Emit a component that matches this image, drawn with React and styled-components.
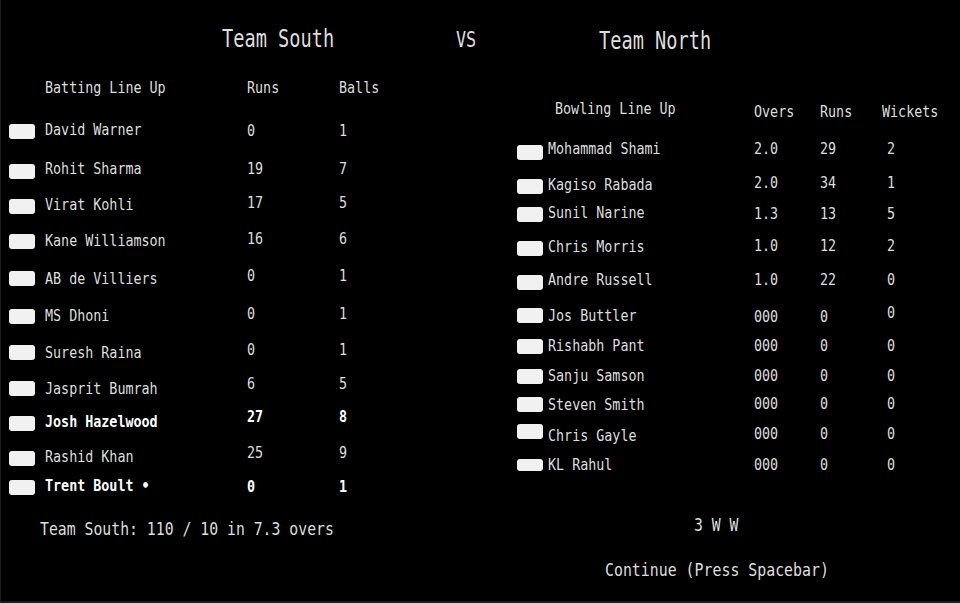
import React from "react";
import styled, { createGlobalStyle } from "styled-components";

const GlobalStyle = createGlobalStyle`
  html, body {
    margin: 0;
    padding: 0;
    background: #000;
  }
`;

const batting = [
  { name: "David Warner", runs: "0", balls: "1", h: 40, nd: 0, vd: 1 },
  { name: "Rohit Sharma", runs: "19", balls: "7", h: 35, nd: -1, vd: -1 },
  { name: "Virat Kohli", runs: "17", balls: "5", h: 35, nd: 0, vd: -2 },
  { name: "Kane Williamson", runs: "16", balls: "6", h: 37, nd: 1, vd: -1 },
  { name: "AB de Villiers", runs: "0", balls: "1", h: 38, nd: 2, vd: -1 },
  { name: "MS Dhoni", runs: "0", balls: "1", h: 36, nd: 1, vd: -1 },
  { name: "Suresh Raina", runs: "0", balls: "1", h: 36, nd: 2, vd: -1 },
  { name: "Jasprit Bumrah", runs: "6", balls: "5", h: 35, nd: 2, vd: -3 },
  { name: "Josh Hazelwood", runs: "27", balls: "8", h: 35, nd: 0, vd: -5, bold: true },
  { name: "Rashid Khan", runs: "25", balls: "9", h: 29, nd: 0, vd: -4 },
  { name: "Trent Boult •", runs: "0", balls: "1", h: 16, nd: 0, vd: 1, bold: true },
];

const bowling = [
  { name: "Mohammad Shami", overs: "2.0", runs: "29", wkts: "2", h: 34, nd: -2, vd: -2 },
  { name: "Kagiso Rabada", overs: "2.0", runs: "34", wkts: "1", h: 28, nd: 0, vd: -2 },
  { name: "Sunil Narine", overs: "1.3", runs: "13", wkts: "5", h: 34, nd: 0, vd: 1 },
  { name: "Chris Morris", overs: "1.0", runs: "12", wkts: "2", h: 34, nd: 0, vd: -1 },
  { name: "Andre Russell", overs: "1.0", runs: "22", wkts: "0", h: 33, nd: -1, vd: -1 },
  { name: "Jos Buttler", overs: "000", runs: "0", wkts: "0", h: 31, nd: 2, vd: 3, wd: -1 },
  { name: "Rishabh Pant", overs: "000", runs: "0", wkts: "0", h: 30, nd: 1, vd: 1 },
  { name: "Sanju Samson", overs: "000", runs: "0", wkts: "0", h: 28, nd: 1, vd: 1 },
  { name: "Steven Smith", overs: "000", runs: "0", wkts: "0", h: 27, nd: 2, vd: 1 },
  { name: "Chris Gayle", overs: "000", runs: "0", wkts: "0", h: 35, nd: 6, vd: 4 },
  { name: "KL Rahul", overs: "000", runs: "0", wkts: "0", h: 16, nd: 0, vd: 0, small: true },
];

const Page = styled.div`
  width: 960px;
  height: 603px;
  box-sizing: border-box;
  padding-top: 29px;
  background: #000;
  border-left: 1px solid #1c1c1c;
  border-bottom: 2px solid #1c1c1c;
  overflow: hidden;
  font-family: "DejaVu Sans Mono", "Liberation Mono", monospace;
  font-variant-numeric: slashed-zero;
  font-feature-settings: "zero" 1;
  color: #dedede;
`;

// cap top of the text lands $dy px below the top of its parent
const Txt = styled.span`
  display: inline-block;
  white-space: nowrap;
  font-size: ${(p) => p.$size || 16}px;
  line-height: ${(p) => p.$size || 16}px;
  font-weight: ${(p) => (p.$bold ? 700 : 400)};
  color: ${(p) => (p.$bold ? "#fff" : "#dedede")};
  transform: scaleX(${(p) => p.$sx || 0.835});
  transform-origin: 0 0;
  margin-top: ${(p) => (p.$dy || 0) - 0.117 * (p.$size || 16)}px;
  margin-left: ${(p) => p.$indent || 0}px;
`;

const Titles = styled.div`
  display: grid;
  grid-template-columns: 234px 143px auto;
  align-items: start;
  height: 22px;
  padding-left: 221px;
`;

const Body = styled.div`
  display: flex;
`;

const BattingPanel = styled.div`
  flex: 0 0 516px;
  padding: 31px 0 0 8px;
  box-sizing: border-box;
  display: flex;
  flex-direction: column;
`;

const BowlingPanel = styled.div`
  flex: 1;
  padding-top: 52px;
  display: flex;
  flex-direction: column;
`;

const BatRow = styled.div`
  display: grid;
  grid-template-columns: 36px 202px 92px auto;
  align-items: start;
  height: ${(p) => p.$h}px;
`;

const BowlRow = styled.div`
  display: grid;
  grid-template-columns: 31px 206px 66px 62px auto;
  align-items: start;
  height: ${(p) => p.$h}px;
`;

const Swatch = styled.div`
  width: 26px;
  height: ${(p) => (p.$small ? 12 : 15)}px;
  background: #f1f1f1;
  border-radius: 3px;
`;

const Footer = styled.div`
  margin: 24px 0 0 31px;
`;

const Last = styled.div`
  margin: 41px 0 0 177px;
  height: 45px;
`;

const Prompt = styled.div`
  margin-left: 88px;
`;

export default function App() {
  return (
    <>
      <GlobalStyle />
      <Page>
        <Titles>
          <Txt $size={25} $sx={0.745}>Team South</Txt>
          <Txt $size={21} $sx={0.8} $dy={3.5}>VS</Txt>
          <Txt $size={25} $sx={0.745} $dy={2}>Team North</Txt>
        </Titles>

        <Body>
          <BattingPanel>
            <BatRow $h={42}>
              <span />
              <Txt>Batting Line Up</Txt>
              <Txt>Runs</Txt>
              <Txt>Balls</Txt>
            </BatRow>
            {batting.map((b) => (
              <BatRow key={b.name} $h={b.h}>
                <Swatch />
                <Txt $dy={b.nd} $bold={b.bold}>{b.name}</Txt>
                <Txt $dy={b.vd} $bold={b.bold}>{b.runs}</Txt>
                <Txt $dy={b.vd} $bold={b.bold}>{b.balls}</Txt>
              </BatRow>
            ))}
            <Footer>
              <Txt $size={17} $sx={0.87}>Team South: 110 / 10 in 7.3 overs</Txt>
            </Footer>
          </BattingPanel>

          <BowlingPanel>
            <BowlRow $h={42}>
              <span />
              <Txt $indent={7}>Bowling Line Up</Txt>
              <Txt $dy={2.5}>Overs</Txt>
              <Txt $dy={2.5}>Runs</Txt>
              <Txt $dy={3}>Wickets</Txt>
            </BowlRow>
            {bowling.map((b) => (
              <BowlRow key={b.name} $h={b.h}>
                <Swatch $small={b.small} />
                <Txt $dy={b.nd}>{b.name}</Txt>
                <Txt $dy={b.vd}>{b.overs}</Txt>
                <Txt $dy={b.vd}>{b.runs}</Txt>
                <Txt $dy={b.wd ?? b.vd} $indent={5}>{b.wkts}</Txt>
              </BowlRow>
            ))}
            <Last>
              <Txt $size={18} $sx={0.82}>3 W W</Txt>
            </Last>
            <Prompt>
              <Txt $size={17} $sx={0.875}>Continue (Press Spacebar)</Txt>
            </Prompt>
          </BowlingPanel>
        </Body>
      </Page>
    </>
  );
}
